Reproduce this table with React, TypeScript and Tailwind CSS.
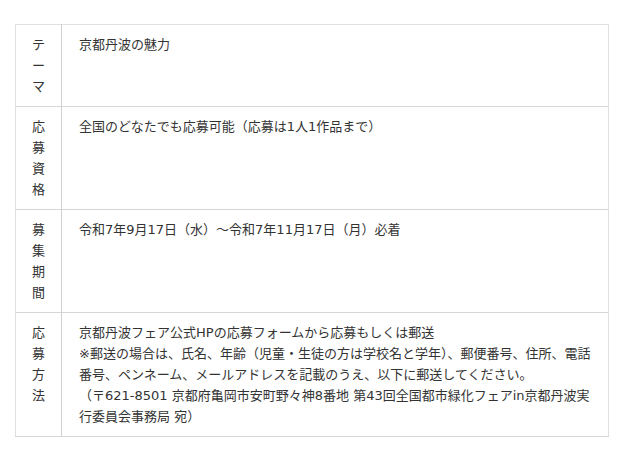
const rows = [
  { head: "テーマ", body: ["京都丹波の魅力"] },
  { head: "応募資格", body: ["全国のどなたでも応募可能（応募は1人1作品まで）"] },
  { head: "募集期間", body: ["令和7年9月17日（水）～令和7年11月17日（月）必着"] },
  {
    head: "応募方法",
    body: [
      "京都丹波フェア公式HPの応募フォームから応募もしくは郵送",
      "※郵送の場合は、氏名、年齢（児童・生徒の方は学校名と学年）、郵便番号、住所、電話番号、ペンネーム、メールアドレスを記載のうえ、以下に郵送してください。",
      "（〒621-8501 京都府亀岡市安町野々神8番地 第43回全国都市緑化フェアin京都丹波実行委員会事務局 宛）",
    ],
  },
];

export default function App() {
  return (
    <div
      className="w-[640px] h-[461px] bg-white pt-[24px] pl-[15px] text-[13px] leading-[21px] text-[#333]"
      style={{ fontFamily: '"DejaVu Sans", "Noto Sans CJK JP", sans-serif' }}
    >
      <table className="w-[594px] border-collapse border border-[#e0e0e0]">
        <tbody>
          {rows.map((r) => (
            <tr key={r.head} className="border-b border-[#d6d6d6]">
              <th className="w-[46px] border-r border-[#d0d0d0] px-[16px] py-[9px] align-top text-center font-normal">
                {r.head}
              </th>
              <td className="pl-[17px] pr-[16px] py-[9px] align-top">
                {r.body.map((t, i) => (
                  <p key={i}>{t}</p>
                ))}
              </td>
            </tr>
          ))}
        </tbody>
      </table>
    </div>
  );
}
